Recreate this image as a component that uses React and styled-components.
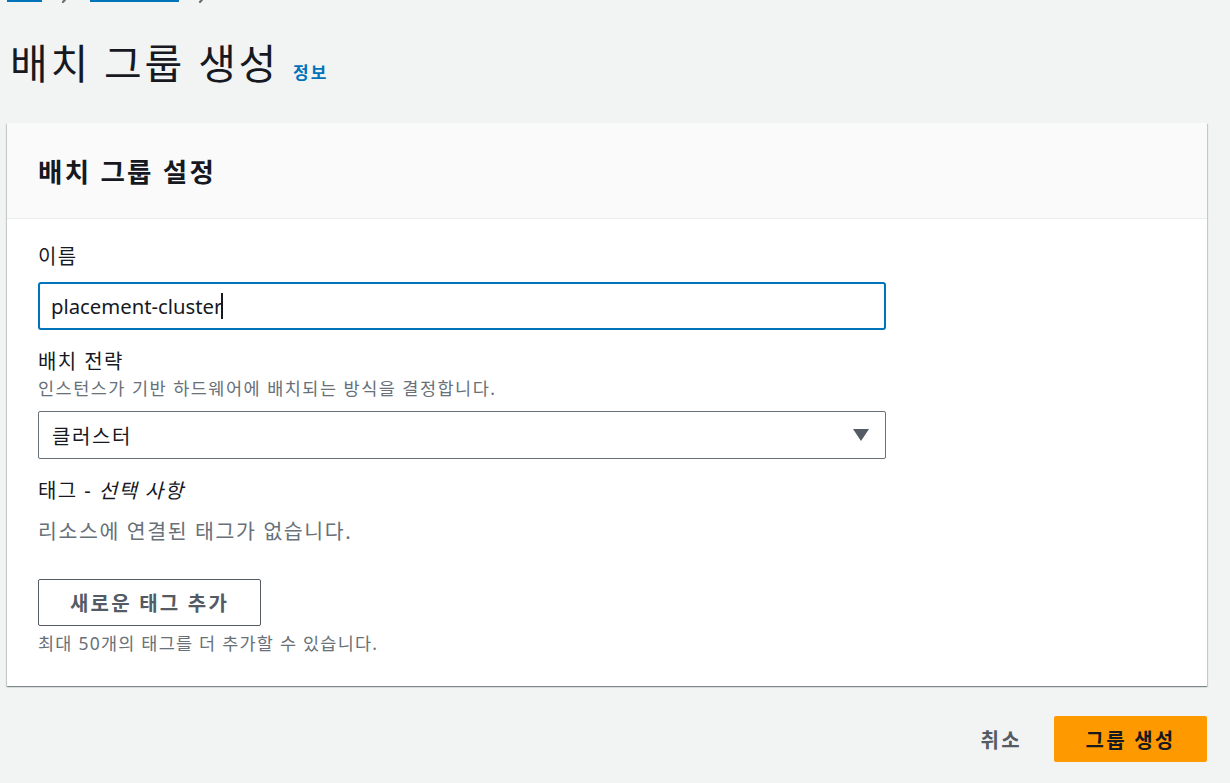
import React from "react";
import styled, { createGlobalStyle } from "styled-components";

const Global = createGlobalStyle`
  html, body { margin: 0; padding: 0; }
  body {
    background: #f2f3f3;
    font-family: "Noto Sans", "Noto Sans CJK KR", sans-serif;
    color: #16191f;
    overflow: hidden;
  }
  * { box-sizing: border-box; }
`;

const Page = styled.div`
  padding: 0 23px 0 7px;
  width: 1230px;
  height: 783px;
  overflow: hidden;
`;

const Breadcrumbs = styled.nav`
  display: flex;
  align-items: flex-end;
  margin-top: -26px;
  height: 28px;
  gap: 18px;
`;

const Crumb = styled.a`
  font-size: 20px;
  line-height: 26px;
  letter-spacing: ${(p) => p.$spacing || 0}em;
  color: #0073bb;
  text-decoration: none;
  border-bottom: 2px solid #0073bb;
  white-space: nowrap;
`;

const Sep = styled.svg`
  width: 12px;
  height: 16px;
  margin-bottom: -1px;
  color: #687078;
`;

const TitleRow = styled.div`
  display: flex;
  align-items: baseline;
  gap: 14px;
  margin: 33px 0 0 3px;
`;

const Title = styled.h1`
  margin: 0;
  font-size: 41px;
  line-height: 56px;
  font-weight: 400;
  letter-spacing: 0.065em;
  color: #16191f;
`;

const InfoLink = styled.a`
  font-size: 17px;
  font-weight: 700;
  letter-spacing: 0.12em;
  color: #0073bb;
  text-decoration: none;
`;

const Card = styled.section`
  margin-top: 32px;
  background: #fff;
  box-shadow: 0 1px 1px 0 rgba(0, 28, 36, 0.3), 1px 1px 1px 0 rgba(0, 28, 36, 0.15),
    -1px 1px 1px 0 rgba(0, 28, 36, 0.15);
`;

const CardHeader = styled.header`
  height: 96px;
  display: flex;
  align-items: center;
  padding: 0 31px;
  background: #fafafa;
  border-bottom: 1px solid #eaeded;
`;

const CardTitle = styled.h2`
  margin: 0;
  font-size: 26.5px;
  font-weight: 700;
  letter-spacing: 0.085em;
  color: #16191f;
`;

const CardBody = styled.div`
  padding: 25px 31px 31px;
  display: flex;
  flex-direction: column;
  gap: 19px;
`;

const Field = styled.div`
  display: flex;
  flex-direction: column;
  width: 848px;
`;

const Label = styled.div`
  font-size: 20px;
  line-height: 26px;
  letter-spacing: 0.07em;
  color: #16191f;
  margin-bottom: ${(p) => p.$gap || 0}px;
`;

const Optional = styled.i`
  font-style: italic;
`;

const Desc = styled.div`
  font-size: 17.5px;
  line-height: 26px;
  letter-spacing: 0.085em;
  color: #687078;
  margin-bottom: ${(p) => p.$gap || 0}px;
`;

const Empty = styled.div`
  font-size: 20.5px;
  line-height: 30px;
  letter-spacing: 0.078em;
  color: #687078;
  margin-top: 12px;
`;

const TextInput = styled.div`
  height: 48px;
  border: 2px solid #0073bb;
  border-radius: 3px;
  display: flex;
  align-items: center;
  padding: 0 11px;
  font-size: 20.3px;
  color: #16191f;
`;

const Caret = styled.span`
  display: inline-block;
  width: 2px;
  height: 26px;
  background: #16191f;
  margin-left: -1px;
`;

const Select = styled.div`
  height: 48px;
  border: 1px solid #687078;
  border-radius: 2px;
  display: flex;
  align-items: center;
  justify-content: space-between;
  padding: 0 16px 0 13px;
  font-size: 20px;
  letter-spacing: 0.08em;
  color: #16191f;
`;

const Arrow = styled.svg`
  width: 16px;
  height: 12px;
  color: #545b64;
`;

const SecondaryButton = styled.button`
  align-self: flex-start;
  margin-top: 33px;
  width: 223px;
  height: 47px;
  border: 1px solid #545b64;
  border-radius: 2px;
  background: #fff;
  font-family: inherit;
  font-size: 20px;
  font-weight: 700;
  letter-spacing: 0.11em;
  color: #545b64;
  padding: 0;
`;

const Hint = styled.div`
  font-size: 17.5px;
  line-height: 24px;
  letter-spacing: 0.07em;
  color: #687078;
  margin-top: 5px;
`;

const Footer = styled.div`
  display: flex;
  justify-content: flex-end;
  align-items: center;
  gap: 32px;
  margin-top: 30px;
`;

const LinkButton = styled.button`
  border: none;
  background: none;
  padding: 0;
  font-family: inherit;
  font-size: 20px;
  font-weight: 700;
  letter-spacing: 0.12em;
  color: #545b64;
`;

const PrimaryButton = styled.button`
  width: 153px;
  height: 46px;
  border: none;
  border-radius: 2px;
  background: #ff9900;
  font-family: inherit;
  font-size: 20px;
  font-weight: 700;
  letter-spacing: 0.11em;
  color: #16191f;
  padding: 0;
`;

const Chevron = () => (
  <Sep viewBox="0 0 12 16" fill="none" stroke="currentColor" strokeWidth="2.2" strokeLinecap="round">
    <path d="M3 1 L9 8 L3 15" />
  </Sep>
);

export default function App() {
  return (
    <>
      <Global />
      <Page>
        <Breadcrumbs>
          <Crumb>EC2</Crumb>
          <Chevron />
          <Crumb $spacing={0.1}>배치 그룹</Crumb>
          <Chevron />
        </Breadcrumbs>
        <TitleRow>
          <Title>배치 그룹 생성</Title>
          <InfoLink>정보</InfoLink>
        </TitleRow>
        <Card>
          <CardHeader>
            <CardTitle>배치 그룹 설정</CardTitle>
          </CardHeader>
          <CardBody>
            <Field>
              <Label $gap={12}>이름</Label>
              <TextInput>
                placement-cluster
                <Caret />
              </TextInput>
            </Field>
            <Field>
              <Label>배치 전략</Label>
              <Desc $gap={10}>인스턴스가 기반 하드웨어에 배치되는 방식을 결정합니다.</Desc>
              <Select>
                클러스터
                <Arrow viewBox="0 0 16 12">
                  <path d="M0 0 H16 L8 12 Z" fill="currentColor" />
                </Arrow>
              </Select>
            </Field>
            <Field>
              <Label>
                태그 - <Optional>선택 사항</Optional>
              </Label>
              <Empty>리소스에 연결된 태그가 없습니다.</Empty>
              <SecondaryButton>새로운 태그 추가</SecondaryButton>
              <Hint>최대 50개의 태그를 더 추가할 수 있습니다.</Hint>
            </Field>
          </CardBody>
        </Card>
        <Footer>
          <LinkButton>취소</LinkButton>
          <PrimaryButton>그룹 생성</PrimaryButton>
        </Footer>
      </Page>
    </>
  );
}
